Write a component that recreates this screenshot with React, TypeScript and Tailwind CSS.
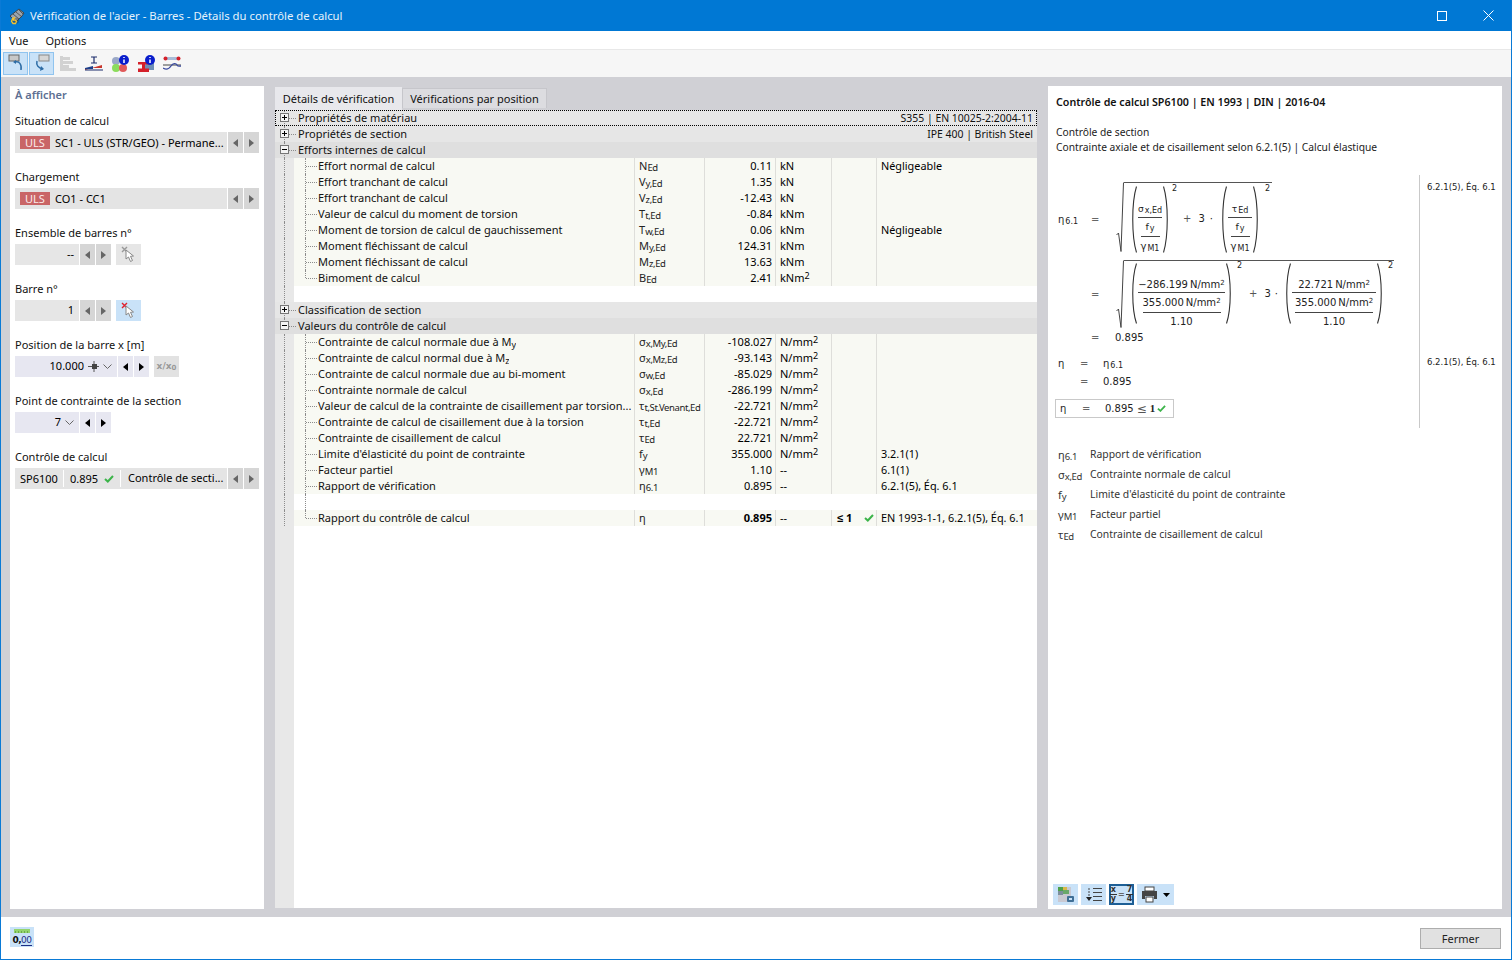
import type { ReactNode } from "react";

const MATH = "font-['DejaVu_Sans',sans-serif] text-[10px] text-[#222]";

function Tri({ dir, off }: { dir: "l" | "r"; off?: boolean }) {
    return (
        <svg width="5" height="8" viewBox="0 0 5 8" className={off ? "fill-[#666]" : "fill-black"}>
            {dir === "l" ? <path d="M5 0v8L0 4z" /> : <path d="M0 0v8l5-4z" />}
        </svg>
    );
}

function Spin({ off }: { off?: boolean }) {
    const bg = off ? "bg-[#d6d6d6]" : "bg-[#e7e7f1]";
    return (
        <div className="flex shrink-0 gap-px">
            <div className={`flex h-[21px] w-[15px] items-center justify-center ${bg}`}>
                <Tri dir="l" off={off} />
            </div>
            <div className={`flex h-[21px] w-[15px] items-center justify-center ${bg}`}>
                <Tri dir="r" off={off} />
            </div>
        </div>
    );
}

function Chevron() {
    return (
        <svg width="9" height="6" viewBox="0 0 9 6" fill="none" stroke="#666" strokeWidth="1">
            <path d="M0.5 0.5 4.5 4.5 8.5 0.5" />
        </svg>
    );
}

function Pick({ active }: { active?: boolean }) {
    return (
        <div className={`ml-[4px] flex h-[21px] w-[25px] items-center justify-center ${active ? "bg-[#c9e2f8]" : "bg-[#e6e6e6]"}`}>
            <svg width="16" height="17" viewBox="0 0 16 17">
                <path d="M1 1 6 6M6 1 1 6" stroke={active ? "#e0202c" : "#999"} strokeWidth="1.4" />
                <path d="M5 4v9l2.5-2 2 4.5 2-1-2-4.200 3-.3z" fill="#fff" stroke="#888" strokeWidth="1" />
            </svg>
        </div>
    );
}

function Field({ label, children }: { label: string; children: ReactNode }) {
    return (
        <div className="mb-[15px]">
            <div className="mb-[2px] h-[18px] leading-[18px] text-[#111]">{label}</div>
            <div className="flex h-[21px] gap-px">{children}</div>
        </div>
    );
}

function Uls({ text }: { text: string }) {
    return (
        <div className="flex h-[21px] w-[212px] items-center bg-[#e4e4e4] pl-[5px]">
            <span className="mr-[5px] flex h-[13px] w-[30px] items-center justify-center bg-[#c96566] pt-px text-[#fbeaea]">ULS</span>
            <span className="truncate pt-px">{text}</span>
        </div>
    );
}

function Check({ size = 10 }: { size?: number }) {
    return (
        <svg width={size} height={size * 0.8} viewBox="0 0 10 8" fill="none" stroke="#3cb44a" strokeWidth="2">
            <path d="M1 4 3.800 6.500 9 1" />
        </svg>
    );
}

function LeftPanel() {
    return (
        <aside className="flex w-[254px] shrink-0 flex-col bg-white px-[5px]">
            <div className="mb-[8px] h-[18px] font-semibold leading-[18px] text-[#5d6f92]">À afficher</div>
            <Field label="Situation de calcul">
                <Uls text="SC1 - ULS (STR/GEO) - Permane..." />
                <Spin off />
            </Field>
            <Field label="Chargement">
                <Uls text="CO1 - CC1" />
                <Spin off />
            </Field>
            <Field label="Ensemble de barres n°">
                <div className="flex h-[21px] w-[64px] items-center justify-end bg-[#e6e6e6] pr-[5px]">--</div>
                <Spin off />
                <Pick />
            </Field>
            <Field label="Barre n°">
                <div className="flex h-[21px] w-[64px] items-center justify-end bg-[#e6e6e6] pr-[5px]">1</div>
                <Spin off />
                <Pick active />
            </Field>
            <Field label="Position de la barre x [m]">
                <div className="flex h-[21px] w-[102px] items-center justify-end bg-[#e7e7f1] pr-[5px]">
                    <span>10.000</span>
                    <svg width="12" height="11" viewBox="0 0 12 11" className="ml-[4px] mr-[3px]">
                        <path d="M0 5.500h11M6 0v11" stroke="#555" strokeWidth="1" />
                        <rect x="4" y="3" width="5" height="5" fill="#444" />
                    </svg>
                    <Chevron />
                </div>
                <Spin />
                <div className="ml-[4px] flex h-[21px] w-[25px] items-center justify-center bg-[#e2e2e2] font-['DejaVu_Sans',sans-serif] text-[9px] font-bold text-[#999]">
                    x/x<span className="relative top-[2px] text-[7px]">0</span>
                </div>
            </Field>
            <Field label="Point de contrainte de la section">
                <div className="flex h-[21px] w-[64px] items-center justify-end gap-[4px] bg-[#e7e7f1] pr-[5px]">
                    <span>7</span>
                    <Chevron />
                </div>
                <Spin />
            </Field>
            <Field label="Contrôle de calcul">
                <div className="flex h-[21px] w-[212px] items-center bg-[#e4e4e4]">
                    <span className="w-[49px] border-r border-white pl-[5px] leading-[17px]">SP6100</span>
                    <span className="flex w-[57px] items-center gap-[6px] border-r border-white pl-[6px] leading-[17px]">
                        0.895 <Check />
                    </span>
                    <span className="truncate pl-[7px]">Contrôle de secti...</span>
                </div>
                <Spin off />
            </Field>
        </aside>
    );
}

function Sym({ b, s }: { b: string; s?: string }) {
    return (
        <span className="whitespace-nowrap">
            {b}
            {s && <span className="relative top-[1px] text-[9.500px] tracking-[-0.4px]">{s}</span>}
        </span>
    );
}

function Unit({ u }: { u: string }) {
    if (u.endsWith("2")) {
        return (
            <span>
                {u.slice(0, -1)}
                <span className="relative -top-[3px] text-[9px]">2</span>
            </span>
        );
    }
    return <span>{u}</span>;
}

type Row = {
    name: ReactNode;
    sym: [string, string?];
    val: string;
    unit: string;
    note?: string;
    bold?: boolean;
    limit?: boolean;
};

const efforts: Row[] = [
    { name: "Effort normal de calcul", sym: ["N", "Ed"], val: "0.11", unit: "kN", note: "Négligeable" },
    { name: "Effort tranchant de calcul", sym: ["V", "y,Ed"], val: "1.35", unit: "kN" },
    { name: "Effort tranchant de calcul", sym: ["V", "z,Ed"], val: "-12.43", unit: "kN" },
    { name: "Valeur de calcul du moment de torsion", sym: ["T", "t,Ed"], val: "-0.84", unit: "kNm" },
    { name: "Moment de torsion de calcul de gauchissement", sym: ["T", "w,Ed"], val: "0.06", unit: "kNm", note: "Négligeable" },
    { name: "Moment fléchissant de calcul", sym: ["M", "y,Ed"], val: "124.31", unit: "kNm" },
    { name: "Moment fléchissant de calcul", sym: ["M", "z,Ed"], val: "13.63", unit: "kNm" },
    { name: "Bimoment de calcul", sym: ["B", "Ed"], val: "2.41", unit: "kNm2" },
];

const valeurs: Row[] = [
    { name: <>Contrainte de calcul normale due à M<span className="relative top-[2px] text-[9px]">y</span></>, sym: ["σ", "x,My,Ed"], val: "-108.027", unit: "N/mm2" },
    { name: <>Contrainte de calcul normal due à M<span className="relative top-[2px] text-[9px]">z</span></>, sym: ["σ", "x,Mz,Ed"], val: "-93.143", unit: "N/mm2" },
    { name: "Contrainte de calcul normale due au bi-moment", sym: ["σ", "w,Ed"], val: "-85.029", unit: "N/mm2" },
    { name: "Contrainte normale de calcul", sym: ["σ", "x,Ed"], val: "-286.199", unit: "N/mm2" },
    { name: "Valeur de calcul de la contrainte de cisaillement par torsion...", sym: ["τ", "t,St.Venant,Ed"], val: "-22.721", unit: "N/mm2" },
    { name: "Contrainte de calcul de cisaillement due à la torsion", sym: ["τ", "t,Ed"], val: "-22.721", unit: "N/mm2" },
    { name: "Contrainte de cisaillement de calcul", sym: ["τ", "Ed"], val: "22.721", unit: "N/mm2" },
    { name: "Limite d'élasticité du point de contrainte", sym: ["f", "y"], val: "355.000", unit: "N/mm2", note: "3.2.1(1)" },
    { name: "Facteur partiel", sym: ["γ", "M1"], val: "1.10", unit: "--", note: "6.1(1)" },
    { name: "Rapport de vérification", sym: ["η", "6.1"], val: "0.895", unit: "--", note: "6.2.1(5), Éq. 6.1" },
];

function Gutter({ half }: { half?: boolean }) {
    return (
        <div className="flex h-full w-[19px] shrink-0 justify-center bg-[#e8e8e8]">
            <div className={`border-l border-dotted border-[#8c8c8c] ${half ? "h-1/2" : "h-full"}`} />
        </div>
    );
}

function Header({ title, right, open, focus, dark, half }: { title: string; right?: string; open?: boolean; focus?: boolean; dark?: boolean; half?: boolean }) {
    return (
        <div className={`relative flex h-4 items-center ${dark ? "bg-[#dfdfdf]" : "bg-[#e6e6e6]"}`}>
            <div className="relative h-full w-[19px] shrink-0">
                <div className={`absolute left-[9px] border-l border-dotted border-[#8c8c8c] ${half ? "top-0 h-1/2" : "top-0 h-full"}`} />
                <div className="absolute left-[5px] top-[3px] flex h-[9px] w-[9px] items-center justify-center border border-[#777] bg-[#f4f4f4]">
                    <div className="h-px w-[5px] bg-black" />
                    {!open && <div className="absolute h-[5px] w-px bg-black" />}
                </div>
                <div className="absolute left-[14px] top-[8px] w-[7px] border-t border-dotted border-[#8c8c8c]" />
            </div>
            <span className="ml-[4px] text-[#111]">{title}</span>
            {right && <span className="ml-auto pr-[4px] pt-px text-[10.450px] text-[#111]">{right}</span>}
            {focus && <div className="pointer-events-none absolute inset-0 border border-dotted border-black" />}
        </div>
    );
}

function DataRow({ row, last }: { row: Row; last?: boolean }) {
    const cell = "h-full border-l border-[#dededa] leading-[16px]";
    return (
        <div className="flex h-4 bg-white">
            <Gutter />
            <div className="flex h-full w-[340px] shrink-0 items-center bg-[#f8f9f3] pl-[11px]">
                <div className={`self-start border-l border-dotted border-[#8c8c8c] ${last ? "h-1/2" : "h-full"}`} />
                <div className="w-[11px] border-t border-dotted border-[#8c8c8c]" />
                <span className="ml-[1px] truncate text-[#111]">{row.name}</span>
            </div>
            <div className={`${cell} w-[70px] bg-[#f8f9f3] pl-[4px] text-[#222]`}>
                <Sym b={row.sym[0]} s={row.sym[1]} />
            </div>
            <div className={`${cell} w-[71px] bg-[#f8f9f3] pr-[3px] text-right ${row.bold ? "font-bold" : ""}`}>{row.val}</div>
            <div className={`${cell} w-[56px] bg-[#f8f9f3] pl-[4px]`}>
                <Unit u={row.unit} />
            </div>
            <div className={`${cell} flex w-[45px] items-center bg-[#f8f9f3] pl-[5px]`}>
                {row.limit && (
                    <>
                        <span className="font-bold">≤ 1</span>
                        <span className="ml-auto mr-[2px]">
                            <Check />
                        </span>
                    </>
                )}
            </div>
            <div className={`${cell} flex-1 bg-[#f8f9f3] pl-[4px] text-[10.850px]`}>{row.note}</div>
        </div>
    );
}

function Blank({ line }: { line?: boolean }) {
    return (
        <div className="flex h-4 bg-white">
            <Gutter />
            {line && <div className="ml-[11px] h-full border-l border-dotted border-[#8c8c8c]" />}
        </div>
    );
}

function CenterPanel() {
    return (
        <section className="mb-px mt-px flex w-[762px] shrink-0 flex-col">
            <div className="flex h-[23px] items-start">
                <div className="flex h-[23px] w-[127px] items-center justify-center bg-[#e8e8ec] pt-px text-[#111]">Détails de vérification</div>
                <div className="mt-px flex h-[20px] w-[145px] items-center justify-center border border-b-0 border-[#c6c6cb] bg-[#dcdce0] pt-px text-[#111]">
                    Vérifications par position
                </div>
            </div>
            <div className="flex flex-1 flex-col bg-white">
                <Header title="Propriétés de matériau" right="S355 | EN 10025-2:2004-11" focus />
                <Header title="Propriétés de section" right="IPE 400 | British Steel" />
                <Header title="Efforts internes de calcul" open dark />
                {efforts.map((r, i) => (
                    <DataRow key={i} row={r} last={i === efforts.length - 1} />
                ))}
                <Blank />
                <Header title="Classification de section" />
                <Header title="Valeurs du contrôle de calcul" open dark half />
                {valeurs.map((r, i) => (
                    <DataRow key={i} row={r} />
                ))}
                <Blank line />
                <DataRow
                    row={{ name: "Rapport du contrôle de calcul", sym: ["η"], val: "0.895", unit: "--", note: "EN 1993-1-1, 6.2.1(5), Éq. 6.1", bold: true, limit: true }}
                    last
                />
                <div className="flex flex-1">
                    <div className="w-[19px] bg-[#e8e8e8]" />
                </div>
            </div>
        </section>
    );
}

function Paren({ h, flip }: { h: number; flip?: boolean }) {
    return (
        <svg width="7" height={h} viewBox={`0 0 7 ${h}`} fill="none" stroke="#333" strokeWidth="1.1" className={`shrink-0 ${flip ? "-scale-x-100" : ""}`}>
            <path d={`M6.500 0.500C1.500 ${h * 0.25} 1.500 ${h * 0.75} 6.500 ${h - 0.5}`} />
        </svg>
    );
}

function Radical({ h }: { h: number }) {
    return (
        <svg width="8" height={h} viewBox={`0 0 8 ${h}`} fill="none" stroke="#444" strokeWidth="1" className="shrink-0">
            <path d={`M0.500 ${h - 17} L2.500 ${h - 19} L5 ${h - 0.5} L7.500 0.500`} />
        </svg>
    );
}

function Power({ mt, ml }: { mt: string; ml: string }) {
    return <span className={`${mt} ${ml} text-[8px] leading-[10px]`}>2</span>;
}

function M({ b, s }: { b: string; s: string }) {
    return (
        <span className="whitespace-nowrap">
            {b}
            <span className="relative top-[1px] ml-px text-[8px]">{s}</span>
        </span>
    );
}

function Mm({ v }: { v: string }) {
    return (
        <span className="whitespace-nowrap">
            {v}&thinsp;N/mm<span className="relative -top-[3px] text-[7px]">2</span>
        </span>
    );
}

function Frac1({ top }: { top: ReactNode }) {
    return (
        <div className="mx-px mt-[17px] flex w-[24px] flex-col items-center">
            <div className="flex h-[15px] w-full items-center justify-center border-b border-[#444] text-[9px]">{top}</div>
            <div className="flex h-[19px] w-[19px] items-center justify-center border-b border-[#444] text-[9.500px]">
                <M b="f" s="y" />
            </div>
            <div className="flex h-[19px] items-center justify-center">
                <M b="γ" s="M1" />
            </div>
        </div>
    );
}

function Frac2({ top, w }: { top: ReactNode; w: string }) {
    return (
        <div className={`mx-px mt-[13px] flex ${w} flex-col items-center`}>
            <div className="flex h-[17px] w-full items-center justify-center border-b border-[#444]">{top}</div>
            <div className="flex h-[20px] w-[78px] items-center justify-center border-b border-[#444]">
                <Mm v="355.000" />
            </div>
            <div className="flex h-[16px] items-center justify-center">1.10</div>
        </div>
    );
}

function Formula() {
    return (
        <div className={`flex h-[253px] ${MATH}`}>
            <div className="w-[364px] shrink-0 border-r border-[#c9c9c9] pl-[2px]">
                <div className="flex h-[84px] items-start pt-[7px]">
                    <div className="mt-[30px] w-[33px]"><M b="η" s="6.1" /></div>
                    <div className="mt-[30px] w-[25px] text-[#666]">=</div>
                    <Radical h={70} />
                    <div className="flex h-[70px] w-[148px] items-start border-t border-[#555] pl-[6px] pt-[3px]">
                        <Paren h={67} />
                        <Frac1 top={<M b="σ" s="x,Ed" />} />
                        <Paren h={67} flip />
                        <Power mt="-mt-[2px]" ml="ml-[2px]" />
                        <span className="ml-[6px] mt-[25px] text-[#555]">+</span>
                        <span className="ml-[7px] mt-[25px]">3</span>
                        <span className="ml-[5px] mt-[25px]">·</span>
                        <div className="ml-[7px]"><Paren h={67} /></div>
                        <Frac1 top={<M b="τ" s="Ed" />} />
                        <Paren h={67} flip />
                        <Power mt="-mt-[2px]" ml="ml-[5px]" />
                    </div>
                </div>
                <div className="flex h-[69px] items-start pt-px">
                    <div className="w-[33px]" />
                    <div className="mt-[27px] w-[25px] text-[#666]">=</div>
                    <Radical h={68} />
                    <div className="flex h-[68px] w-[270px] items-start border-t border-[#555] pl-[6px] pt-[2px]">
                        <Paren h={61} />
                        <Frac2 top={<Mm v="−286.199" />} w="w-[87px]" />
                        <Paren h={61} flip />
                        <Power mt="-mt-[2px]" ml="ml-[4px]" />
                        <span className="ml-[7px] mt-[23px] text-[#555]">+</span>
                        <span className="ml-[7px] mt-[23px]">3</span>
                        <span className="ml-[4px] mt-[23px]">·</span>
                        <div className="ml-[6px]"><Paren h={61} /></div>
                        <Frac2 top={<Mm v="22.721" />} w="w-[84px]" />
                        <Paren h={61} flip />
                        <Power mt="-mt-[2px]" ml="ml-[4px]" />
                    </div>
                </div>
                <div className="flex h-[18px] items-center">
                    <div className="w-[33px]" />
                    <div className="w-[24px] text-[#666]">=</div>
                    <span>0.895</span>
                </div>
                <div className="mt-[8px] flex h-[18px] items-center">
                    <div className="w-[22px]">η</div>
                    <div className="w-[23px] text-[#666]">=</div>
                    <M b="η" s="6.1" />
                </div>
                <div className="flex h-[18px] items-center">
                    <div className="w-[22px]" />
                    <div className="w-[23px] text-[#666]">=</div>
                    <span>0.895</span>
                </div>
                <div className="-ml-[3px] mt-[9px] flex h-[19px] w-[119px] items-center border border-[#c9c9c9] pl-[4px]">
                    <span className="w-[22px]">η</span>
                    <span className="w-[23px] text-[#666]">=</span>
                    <span>0.895</span>
                    <span className="ml-[3px] text-[12px] leading-none text-[#555]">≤</span>
                    <span className="ml-[3px] mr-[2px] font-['Liberation_Serif',serif] text-[11px] font-bold">1</span>
                    <Check size={9} />
                </div>
            </div>
            <div className="pl-[7px] pt-[6px] text-[8.500px]">
                <div className="h-[175px] whitespace-nowrap">6.2.1(5), Éq. 6.1</div>
                <div className="whitespace-nowrap">6.2.1(5), Éq. 6.1</div>
            </div>
        </div>
    );
}

const legend: [string, string, string][] = [
    ["η", "6.1", "Rapport de vérification"],
    ["σ", "x,Ed", "Contrainte normale de calcul"],
    ["f", "y", "Limite d'élasticité du point de contrainte"],
    ["γ", "M1", "Facteur partiel"],
    ["τ", "Ed", "Contrainte de cisaillement de calcul"],
];

function ToolBtn({ children, w = "w-[25px]", active }: { children: ReactNode; w?: string; active?: boolean }) {
    return (
        <div className={`flex h-[21px] ${w} items-center justify-center bg-[#c9e2f8] ${active ? "border-2 border-[#1d5f96]" : ""}`}>{children}</div>
    );
}

function RightPanel() {
    return (
        <section className="flex w-[454px] shrink-0 flex-col bg-white px-[8px]">
            <div className="mt-[8px] h-4 text-[10.700px] font-semibold leading-4 text-[#111]">Contrôle de calcul SP6100 | EN 1993 | DIN | 2016-04</div>
            <div className="mt-[15px] text-[10.250px] leading-[15px] text-[#222]">
                <div>Contrôle de section</div>
                <div>Contrainte axiale et de cisaillement selon 6.2.1(5) | Calcul élastique</div>
            </div>
            <div className="mt-[20px]">
                <Formula />
            </div>
            <div className="mt-[17px] flex flex-col pl-[2px]">
                {legend.map(([b, s, t]) => (
                    <div key={t} className="flex h-5 items-center text-[#333]">
                        <span className="w-[32px]"><Sym b={b} s={s} /></span>
                        <span className="text-[10.400px]">{t}</span>
                    </div>
                ))}
            </div>
            <div className="-ml-[3px] mb-[4px] mt-auto flex items-center gap-[3px]">
                <ToolBtn>
                    <svg width="18" height="18" viewBox="0 0 18 18">
                        <rect x="1" y="1" width="13" height="15" fill="#c9c9d2" />
                        <rect x="1" y="1" width="5" height="4" fill="#4fa04a" />
                        <rect x="6" y="1" width="4" height="3" fill="#d8b84a" />
                        <rect x="6" y="4" width="6" height="4" fill="#6aa86a" />
                        <rect x="1" y="5" width="5" height="4" fill="#7c8f9c" />
                        <rect x="10" y="10" width="7" height="6" rx="1" fill="#3f6f96" />
                        <rect x="12" y="12" width="3" height="2" fill="#c9e2f8" />
                    </svg>
                </ToolBtn>
                <ToolBtn>
                    <svg width="18" height="18" viewBox="0 0 18 18" fill="none" stroke="#444">
                        <path d="M8 2.500h9M8 6.500h9M8 10.500h9M8 14.500h9" />
                        <path d="M4 2v9" strokeDasharray="2 1" />
                        <path d="M1 11h6l-3 4z" fill="#222" stroke="none" />
                    </svg>
                </ToolBtn>
                <ToolBtn active>
                    <div className="flex items-center font-['DejaVu_Sans',sans-serif] text-[8px] font-bold leading-[8px] text-[#333]">
                        <div className="flex flex-col items-center">
                            <span className="border-b border-[#333] px-px">x</span>
                            <span>y</span>
                        </div>
                        <span className="mx-px text-[#666]">=</span>
                        <div className="flex flex-col items-center">
                            <span className="border-b border-[#333] px-px">7</span>
                            <span>4</span>
                        </div>
                    </div>
                </ToolBtn>
                <ToolBtn w="w-[37px]">
                    <svg width="17" height="17" viewBox="0 0 17 17">
                        <rect x="4" y="1" width="9" height="4" fill="#fff" stroke="#444" />
                        <path d="M1 5h15v8h-3v-3H4v3H1z" fill="#444" />
                        <rect x="5" y="11" width="7" height="5" fill="#fff" stroke="#444" />
                    </svg>
                    <svg width="7" height="4" viewBox="0 0 7 4" className="ml-[5px] fill-black">
                        <path d="M0 0h7L3.500 4z" />
                    </svg>
                </ToolBtn>
            </div>
        </section>
    );
}

function TopIcons() {
    return (
        <div className="flex h-[27px] items-center bg-[#f6f6f6] pl-[2px]">
            <div className="flex h-[23px] w-[25px] items-center justify-center border border-[#90c4ef] bg-[#c9e2f8]">
                <svg width="18" height="19" viewBox="0 0 18 19" fill="none">
                    <rect x="2" y="1" width="10" height="6" fill="#c8c8c8" stroke="#666" />
                    <path d="M8 8c4-1 7 2 6 8" stroke="#2d6ca5" strokeWidth="1.500" />
                    <path d="M6 8l3-2v4z" fill="#2d6ca5" />
                </svg>
            </div>
            <div className="ml-px flex h-[23px] w-[25px] items-center justify-center border border-[#90c4ef] bg-[#c9e2f8]">
                <svg width="18" height="19" viewBox="0 0 18 19" fill="none">
                    <rect x="6" y="1" width="10" height="6" fill="#d6d6d6" stroke="#888" />
                    <path d="M4 7c-1 4 1 7 6 8" stroke="#2d6ca5" strokeWidth="1.500" />
                    <path d="M11 15l-4 2 1-5z" fill="#2d6ca5" />
                </svg>
            </div>
            <div className="ml-[4px] flex w-[20px] justify-center">
                <svg width="18" height="17" viewBox="0 0 18 17" fill="#d2d2d2">
                    <rect x="1" y="1" width="3" height="15" />
                    <rect x="4" y="2" width="7" height="3" />
                    <rect x="4" y="6" width="10" height="3" />
                    <rect x="4" y="10" width="6" height="3" />
                    <rect x="4" y="13" width="13" height="3" />
                </svg>
            </div>
            <div className="ml-[6px] flex w-[20px] justify-center">
                <svg width="18" height="17" viewBox="0 0 18 17">
                    <path d="M6 2h6M9 2v6M6 8h6" stroke="#1a2a6a" strokeWidth="1.200" />
                    <path d="M0 15 17 10v3H0z" fill="#c8362c" />
                    <path d="M0 13 8 11v3H0z" fill="#1d3f8a" />
                    <path d="M0 15h18" stroke="#1a2a6a" strokeWidth="1" />
                </svg>
            </div>
            <div className="ml-[6px] flex w-[20px] justify-center">
                <svg width="18" height="18" viewBox="0 0 18 18">
                    <circle cx="5" cy="6" r="4" fill="#9aa8c8" />
                    <circle cx="5" cy="13" r="4" fill="#8bdc5c" />
                    <circle cx="12" cy="13" r="4" fill="#e05a5a" />
                    <circle cx="13" cy="5" r="5" fill="#0a1ecc" />
                    <path d="M13 2v1M13 4.500V8" stroke="#fff" strokeWidth="1.500" />
                </svg>
            </div>
            <div className="ml-[6px] flex w-[20px] justify-center">
                <svg width="18" height="18" viewBox="0 0 18 18">
                    <path d="M9 6l8-2v11H7z" fill="#6e8fb5" />
                    <path d="M1 7h11v2.500H8v4h4V17H1v-3.500h4v-4H1z" fill="#d4202a" />
                    <circle cx="13" cy="5" r="5" fill="#0a1ecc" />
                    <path d="M13 2v1M13 4.500V8" stroke="#fff" strokeWidth="1.500" />
                </svg>
            </div>
            <div className="ml-[6px] flex w-[20px] justify-center">
                <svg width="18" height="17" viewBox="0 0 18 17" fill="none">
                    <rect x="3" y="2" width="12" height="3" fill="#a8bcd8" />
                    <circle cx="2.500" cy="3.500" r="2" fill="#d4202a" />
                    <circle cx="15.500" cy="3.500" r="2" fill="#d4202a" />
                    <path d="M0 10h18" stroke="#444" />
                    <path d="M0 13c3 2 6 1 8-2s5-3 6-1 3 1 4 1" stroke="#3a4aa0" strokeWidth="1.300" />
                </svg>
            </div>
        </div>
    );
}

export default function App() {
    return (
        <div className="flex h-[960px] w-[1512px] flex-col overflow-hidden border-x border-b border-[#0a7ad6] bg-white font-['Noto_Sans',sans-serif] text-[11px] text-black">
            <header className="-mx-px flex h-[31px] shrink-0 items-center bg-[#0078d4] pr-px text-[11.300px] text-[#e6f2fb]">
                <div className="relative ml-[8px] h-[18px] w-[18px]">
                    <svg width="18" height="18" viewBox="0 0 18 18">
                        <path d="M2 9 11 2l5 4-2 3-6 6z" fill="#9aa4ae" stroke="#333" strokeWidth="0.800" />
                        <path d="M5 7l6 5M8 5l6 5M11 3l4 4" stroke="#444" strokeWidth="0.800" />
                        <path d="M7 11a3 3 0 1 0 0 5.500 3 3 0 1 0 0-5.500z" fill="#333" opacity="0.350" />
                        <path d="M7 10.500 4.500 11.500 3.500 14.500 5 16.500 7.500 16.500 8.500 14.500 7 13 5.500 13.500M5.500 13.500 5.200 12 7 10.500" fill="none" stroke="#f2c230" strokeWidth="1.300" />
                    </svg>
                </div>
                <span className="ml-[4px] pt-px">Vérification de l'acier - Barres - Détails du contrôle de calcul</span>
                <div className="ml-auto flex h-full">
                    <div className="w-[46px]" />
                    <div className="flex w-[46px] items-center justify-center">
                        <div className="h-[10px] w-[10px] border border-white" />
                    </div>
                    <div className="flex w-[46px] items-center justify-center">
                        <svg width="11" height="11" viewBox="0 0 11 11" stroke="#fff" strokeWidth="1">
                            <path d="M0.500 0.500 10.500 10.500M10.500 0.500 0.500 10.500" />
                        </svg>
                    </div>
                </div>
            </header>
            <nav className="flex h-[19px] shrink-0 items-center border-b border-[#e8e8e8] pl-[8px] pt-[2px] text-[#111]">
                <span>Vue</span>
                <span className="ml-[17px]">Options</span>
            </nav>
            <TopIcons />
            <main className="flex flex-1 gap-[11px] bg-[#d0d0d5] pb-[8px] pl-[9px] pt-[9px]">
                <LeftPanel />
                <CenterPanel />
                <RightPanel />
            </main>
            <footer className="flex h-[42px] shrink-0 items-start justify-between pl-[9px] pr-[10px] pt-[10px]">
                <div className="flex h-[20px] w-[24px] flex-col items-center justify-center bg-[#c9e2f8]">
                    <div className="flex h-[4px] w-[16px] items-end gap-[2px] bg-[#93d46e] px-px">
                        <div className="h-[2px] w-px bg-[#6aa84a]" />
                        <div className="h-[2px] w-px bg-[#6aa84a]" />
                        <div className="h-[2px] w-px bg-[#6aa84a]" />
                        <div className="h-[2px] w-px bg-[#6aa84a]" />
                        <div className="h-[2px] w-px bg-[#6aa84a]" />
                    </div>
                    <span className="mt-px font-['DejaVu_Sans',sans-serif] text-[9px] font-bold leading-[12px] tracking-[-0.5px] text-[#111]">
                        0,<span className="border-b border-[#1d2f86] font-normal text-[#1d2f86]">00</span>
                    </span>
                </div>
                <button className="mt-px flex h-[21px] w-[81px] items-center justify-center border border-[#adadad] bg-[#e1e1e1] pt-px text-[#222]">Fermer</button>
            </footer>
        </div>
    );
}
